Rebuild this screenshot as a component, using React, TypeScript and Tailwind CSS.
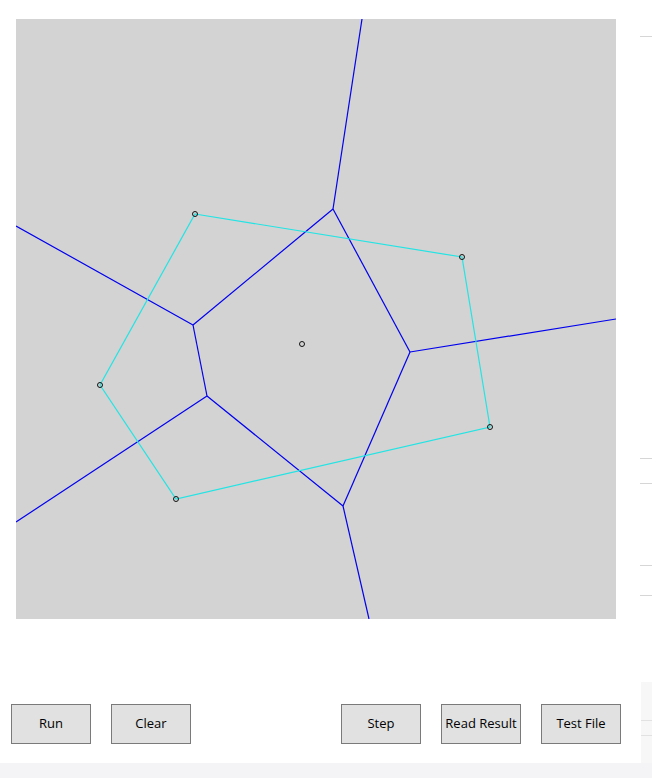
import React from "react";

// posiciones en coordenadas del lienzo (600x600)
const sites: [number, number][] = [
  [179, 195],
  [446, 238],
  [474, 408],
  [160, 480],
  [84, 366],
  [286, 325],
];

const hull = [0, 1, 2, 3, 4];

const edges: [number, number, number, number][] = [
  [346, 0, 317, 190],
  [317, 190, 177, 306],
  [317, 190, 394, 333],
  [0, 207, 177, 306],
  [177, 306, 191, 377],
  [394, 333, 600, 300],
  [394, 333, 327, 487],
  [191, 377, 327, 487],
  [191, 377, 0, 503],
  [327, 487, 353, 600],
];

function Btn({ label }: { label: string }) {
  return (
    <button className="w-[80px] h-[40px] bg-[#e1e1e1] border border-[#7a7a7a] text-[13px] text-black font-['Open_Sans',sans-serif]">
      {label}
    </button>
  );
}

function Tick({ top }: { top: number }) {
  return <div className="h-px w-[12px] bg-[#d6d6d6]" style={{ marginTop: top }} />;
}

export default function App() {
  return (
    <div className="w-[652px] h-[778px] bg-white flex flex-col overflow-hidden">
      <div className="flex flex-1">
        <div className="flex flex-col w-[640px]">
          <div className="pt-[19px] pl-[16px]">
            <svg width={600} height={600} viewBox="0 0 600 600" className="block bg-[#d3d3d3]">
              {edges.map(([x1, y1, x2, y2], i) => (
                <line key={i} x1={x1} y1={y1} x2={x2} y2={y2} stroke="#0000ee" strokeWidth={1.2} />
              ))}
              <polygon
                points={hull.map((i) => sites[i].join(",")).join(" ")}
                fill="none"
                stroke="#22e4e4"
                strokeWidth={1.2}
              />
              {sites.map(([x, y], i) => (
                <circle key={i} cx={x} cy={y} r={2.5} fill="none" stroke="#111" strokeWidth={1} />
              ))}
            </svg>
          </div>
          <div className="flex items-start mt-[85px] pl-[11px]">
            <Btn label="Run" />
            <div className="w-[20px]" />
            <Btn label="Clear" />
            <div className="w-[150px]" />
            <Btn label="Step" />
            <div className="w-[20px]" />
            <Btn label="Read Result" />
            <div className="w-[20px]" />
            <Btn label="Test File" />
          </div>
        </div>
        <div className="flex flex-col items-end flex-1">
          <Tick top={36} />
          <Tick top={421} />
          <Tick top={24} />
          <Tick top={81} />
          <Tick top={29} />
          <div className="mt-[86px] flex-1 w-[11px] bg-[#f7f7f8] flex flex-col">
            <div className="h-px bg-[#e2e2e2] mt-[38px]" />
            <div className="h-px bg-[#e2e2e2] mt-[14px]" />
          </div>
        </div>
      </div>
      <div className="h-[15px] bg-[#f4f4f6]" />
    </div>
  );
}
